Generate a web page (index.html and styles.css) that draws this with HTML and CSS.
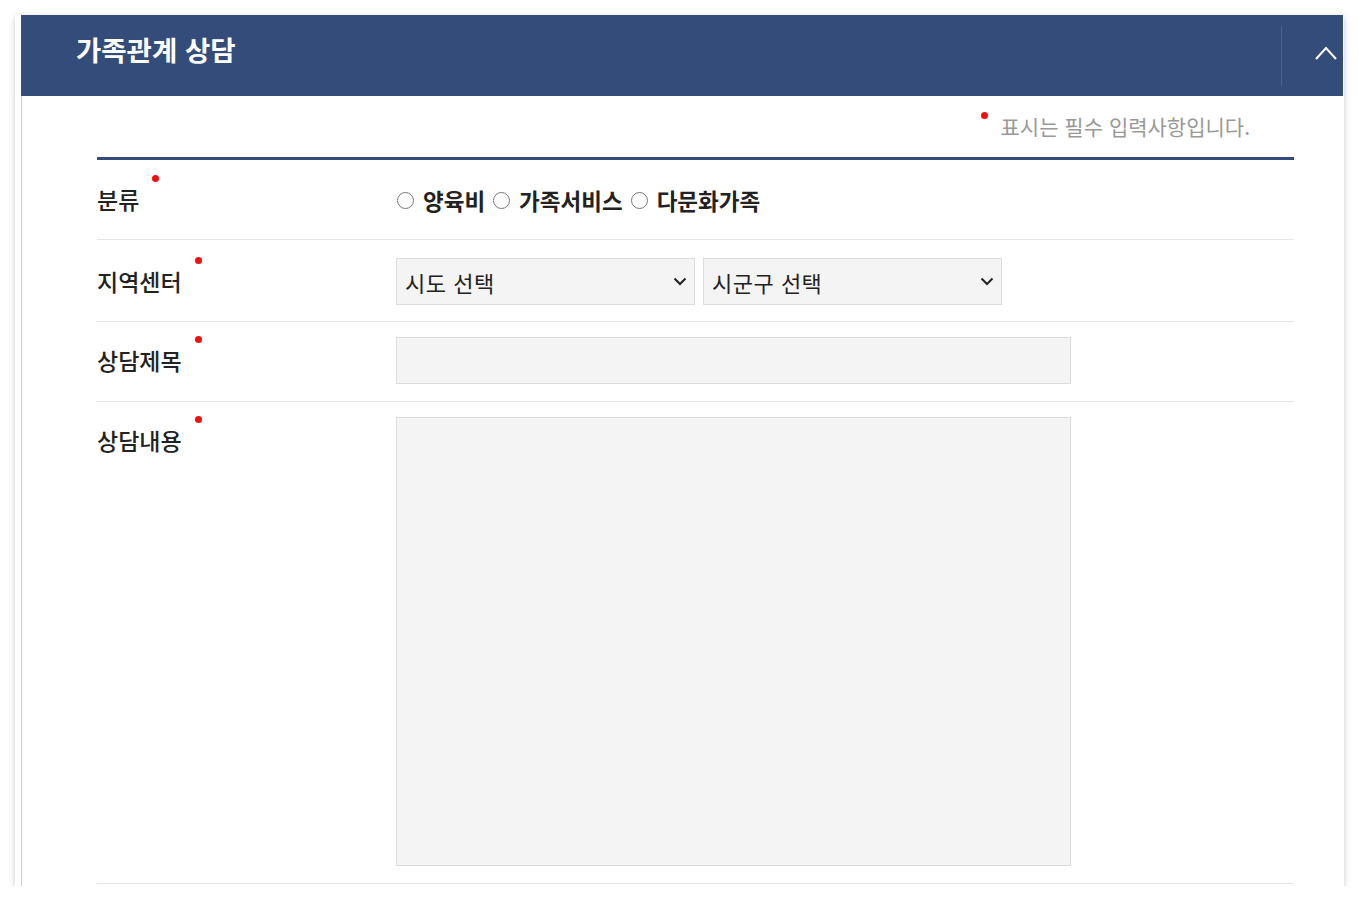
FILE: index.html
```html
<!DOCTYPE html>
<html lang="ko">
<head>
    <meta charset="UTF-8">
    <title>가족관계 상담</title>
    <link rel="stylesheet" href="styles.css">
</head>
<body>

<div class="panel">
    <div class="panel-inner">
        <!-- 헤더 -->
        <div class="panel-head">
            <h2>가족관계 상담</h2>
            <button class="toggle-btn" type="button">
                <svg width="22" height="14" viewBox="0 0 22 14"><polyline points="1,13 11,2 21,13" fill="none" stroke="#fff" stroke-width="2"/></svg>
            </button>
        </div>

        <div class="panel-body">
            <p class="req-note"><span class="dot"></span>표시는 필수 입력사항입니다.</p>

            <div class="form-table">
                <div class="form-row">
                    <div class="form-label">분류<span class="dot"></span></div>
                    <div class="form-field radios">
                        <label><span class="radio"></span>양육비</label>
                        <label><span class="radio"></span>가족서비스</label>
                        <label><span class="radio"></span>다문화가족</label>
                    </div>
                </div>

                <div class="form-row row-select">
                    <div class="form-label">지역센터<span class="dot"></span></div>
                    <div class="form-field selects">
                        <div class="select">시도 선택
                            <svg width="14" height="9" viewBox="0 0 14 9"><polyline points="1.5,1.5 7,7 12.5,1.5" fill="none" stroke="#222" stroke-width="2"/></svg>
                        </div>
                        <div class="select">시군구 선택
                            <svg width="14" height="9" viewBox="0 0 14 9"><polyline points="1.5,1.5 7,7 12.5,1.5" fill="none" stroke="#222" stroke-width="2"/></svg>
                        </div>
                    </div>
                </div>

                <div class="form-row row-input">
                    <div class="form-label">상담제목<span class="dot"></span></div>
                    <div class="form-field">
                        <input type="text" class="text-input">
                    </div>
                </div>

                <div class="form-row row-input">
                    <div class="form-label">상담내용<span class="dot"></span></div>
                    <div class="form-field">
                        <textarea class="text-area"></textarea>
                    </div>
                </div>
            </div>
        </div>
    </div>
</div>

</body>
</html>
```

FILE: styles.css
```css
body {
    margin: 0;
    padding: 15px 0 0 15px;
    font-family: "Noto Sans CJK KR", "Noto Sans", sans-serif;
    color: #222;
    background: #fff;
}

.panel {
    width: 1329px;
    height: 871px;
    background: #fff;
    box-shadow: 0 2px 6px rgba(0, 0, 0, 0.22);
}

.panel-inner {
    margin-left: 6px;
    width: 1322px;
}

/* 헤더 */
.panel-head {
    height: 81px;
    background: #344c79;
    display: flex;
    align-items: center;
    padding-left: 55px;
}

.panel-head h2 {
    flex: 1;
    margin: 0;
    font-size: 27.5px;
    font-weight: 700;
    color: #fff;
    padding-bottom: 13px;
}

.toggle-btn {
    width: 62px;
    height: 60px;
    border: none;
    border-left: 1px solid #4a6191;
    background: transparent;
    display: flex;
    align-items: center;
    justify-content: flex-end;
    padding: 0 6px 6px 0;
    cursor: pointer;
}

.panel-body {
    border-left: 1px solid #cfcfcf;
    padding: 0 49px 0 75px;
    height: 790px;
}

.req-note {
    margin: 0;
    height: 61px;
    text-align: right;
    padding-right: 44px;
    font-size: 21px;
    line-height: 60px;
    color: #999;
}

.req-note .dot {
    vertical-align: top;
    margin: 16px 13px 0 0;
}

.dot {
    display: inline-block;
    width: 7px;
    height: 7px;
    border-radius: 50%;
    background: #f01010;
}

/* 폼 */
.form-table {
    border-top: 3px solid #344c79;
}

.form-row {
    display: grid;
    grid-template-columns: 299px 1fr;
    padding: 16px 0;
    border-bottom: 1px solid #e6e6e6;
}

.row-select {
    padding: 18px 0 16px;
}

.row-input {
    padding: 15px 0 17px;
}

.form-label {
    font-size: 23px;
    font-weight: 500;
    line-height: 47px;
}

.form-label .dot {
    vertical-align: top;
    margin: -1px 0 0 13px;
}

.form-field {
    display: flex;
    align-items: center;
}

.radios {
    gap: 7px;
    font-size: 22.5px;
    font-weight: 700;
}

.radios label {
    display: flex;
    align-items: center;
    gap: 9px;
}

.radio {
    box-sizing: border-box;
    width: 17px;
    height: 17px;
    border: 1.5px solid #777;
    border-radius: 50%;
    margin: 2px 0 0 1px;
}

.selects {
    gap: 8px;
}

.select {
    box-sizing: border-box;
    width: 299px;
    height: 47px;
    background: #f4f4f4;
    border: 1px solid #dcdcdc;
    display: flex;
    align-items: center;
    justify-content: space-between;
    padding: 0 7px 0 8px;
    font-size: 22px;
    letter-spacing: 0.5px;
}

.text-input, .text-area {
    box-sizing: border-box;
    width: 675px;
    background: #f4f4f4;
    border: 1px solid #dcdcdc;
    margin: 0;
    padding: 0;
    font-family: inherit;
}

.text-input {
    height: 47px;
}

.text-area {
    height: 449px;
    resize: none;
}
```
